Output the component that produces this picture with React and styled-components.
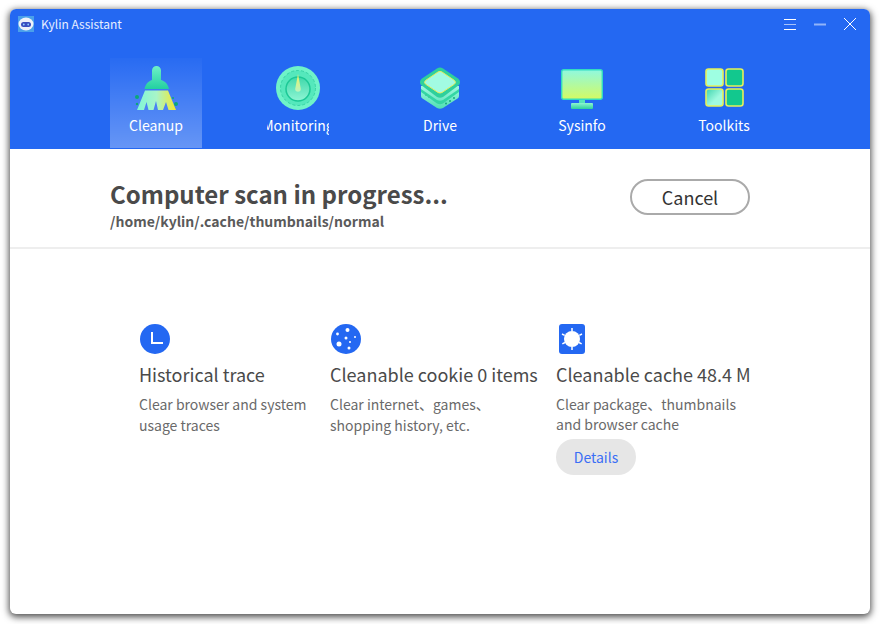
import styled, { createGlobalStyle } from "styled-components";

const GlobalStyle = createGlobalStyle`
  html, body {
    margin: 0;
    padding: 0;
    background: #fff;
  }
  * { box-sizing: border-box; }
`;

const Page = styled.div`
  width: 880px;
  height: 624px;
  padding: 9px 10px 10px;
  font-family: "Noto Sans CJK SC", "Noto Sans", sans-serif;
  overflow: hidden;
`;

const Window = styled.div`
  width: 860px;
  height: 605px;
  display: flex;
  flex-direction: column;
  background: #fff;
  border-radius: 6px;
  overflow: hidden;
  box-shadow: 0 2px 7px 1px rgba(0, 0, 0, 0.7);
`;

const Header = styled.header`
  height: 140px;
  flex: none;
  background: #2468f2;
  display: flex;
  flex-direction: column;
`;

const TitleBar = styled.div`
  height: 49px;
  display: flex;
  align-items: flex-start;
  padding: 7px 13px 0 8px;
`;

const AppName = styled.div`
  margin-left: 7px;
  font-size: 12px;
  line-height: 16px;
  color: #e8efff;
`;

const WindowControls = styled.div`
  margin-left: auto;
  display: flex;
  gap: 16px;
  padding-top: 1px;
`;

const ControlIcon = styled.svg`
  width: 14px;
  height: 14px;
  display: block;
  stroke: #fff;
  fill: none;
`;

const Nav = styled.nav`
  display: flex;
  gap: 50px;
  padding-left: 100px;
`;

const Tab = styled.div`
  width: 92px;
  height: 90px;
  display: flex;
  flex-direction: column;
  align-items: center;
  padding-top: 7px;
  background: ${(p) =>
    p.$active
      ? "linear-gradient(180deg, rgba(255,255,255,0.02), rgba(255,255,255,0.3))"
      : "transparent"};
`;

const TabIcon = styled.svg`
  width: 46px;
  height: 46px;
  display: block;
`;

const TabLabel = styled.div`
  width: 62px;
  margin-top: 4px;
  display: flex;
  justify-content: center;
  overflow: hidden;
  white-space: nowrap;
  font-size: 14px;
  line-height: 20px;
  color: #fff;
`;

const ScanBar = styled.section`
  height: 100px;
  flex: none;
  display: flex;
  align-items: flex-start;
  justify-content: space-between;
  padding: 28px 120px 0 100px;
  border-bottom: 2px solid #eeeeee;
`;

const ScanTitle = styled.h1`
  margin: 0;
  font-size: 24px;
  line-height: 34px;
  font-weight: 700;
  color: #4a4a4a;
`;

const ScanPath = styled.div`
  font-size: 14px;
  line-height: 20px;
  font-weight: 700;
  color: #5a5a5a;
`;

const CancelButton = styled.button`
  width: 120px;
  height: 36px;
  margin-top: 2px;
  border: 2px solid #aaaaaa;
  border-radius: 18px;
  background: #fff;
  font-family: inherit;
  font-size: 18px;
  line-height: 24px;
  color: #333;
  padding: 0;
`;

const Columns = styled.section`
  display: grid;
  grid-template-columns: 191px 226px 200px;
  padding: 74px 0 0 129px;
`;

const Column = styled.div`
  display: flex;
  flex-direction: column;
  align-items: flex-start;
`;

const ItemIcon = styled.svg`
  width: 32px;
  height: 32px;
  display: block;
`;

const ItemTitle = styled.div`
  margin-top: 6px;
  font-size: 18px;
  line-height: 26px;
  color: #4a4a4a;
  white-space: nowrap;
`;

const ItemText = styled.div`
  margin-top: 7px;
  font-size: 14px;
  line-height: ${(p) => (p.$tight ? 20 : 21)}px;
  color: #6a6a6a;
  white-space: nowrap;
`;

const DetailsButton = styled.button`
  width: 80px;
  height: 36px;
  margin-top: 5px;
  border: none;
  border-radius: 18px;
  background: #e6e6e6;
  font-family: inherit;
  font-size: 14px;
  color: #3b6ef5;
  padding: 0;
`;

const CleanupIcon = () => (
  <TabIcon viewBox="0 0 46 46">
    <defs>
      <linearGradient id="brushTop" x1="0" y1="0" x2="0" y2="1">
        <stop offset="0" stopColor="#6ff0c8" />
        <stop offset="1" stopColor="#22d0a0" />
      </linearGradient>
      <linearGradient id="brushBottom" x1="0" y1="0" x2="1" y2="0">
        <stop offset="0" stopColor="#7ff5d8" />
        <stop offset="0.5" stopColor="#a8f5c8" />
        <stop offset="1" stopColor="#f4e82c" />
      </linearGradient>
    </defs>
    <path d="M19 15V5.500a4.500 4.500 0 0 1 9 0V15c4 1 7 4 8 9H11.500c1-5 4-8 7.500-9z" fill="url(#brushTop)" />
    <path d="M12 25.500H35L43 45H35.500L33 37L30 45H25L23 36L20.500 45H15.500L13.500 37L11 45H4z" fill="url(#brushBottom)" />
    <circle cx="4" cy="32" r="2" fill="#0aa878" />
    <circle cx="43" cy="39" r="2" fill="#0aa878" />
    <circle cx="4" cy="39" r="1.200" fill="#0aa878" />
    <circle cx="40" cy="33" r="1" fill="#0aa878" />
  </TabIcon>
);

const MonitoringIcon = () => (
  <TabIcon viewBox="0 0 46 46">
    <defs>
      <linearGradient id="gaugeInner" x1="0" y1="0" x2="0" y2="1">
        <stop offset="0" stopColor="#3fd8aa" />
        <stop offset="1" stopColor="#8ff5d4" />
      </linearGradient>
      <linearGradient id="needle" x1="0" y1="0" x2="0" y2="1">
        <stop offset="0" stopColor="#eef060" />
        <stop offset="1" stopColor="#b8f5c0" />
      </linearGradient>
    </defs>
    <circle cx="23" cy="23" r="22" fill="#6ff3c8" />
    <circle cx="23" cy="23" r="17.500" fill="#55e8bc" stroke="#38d4a6" strokeWidth="1" strokeDasharray="3 2" />
    <circle cx="23" cy="24" r="12" fill="url(#gaugeInner)" stroke="#1cc896" strokeWidth="1.500" />
    <path d="M23 9l2.800 15a2.800 2.800 0 1 1-5.600 0z" fill="url(#needle)" />
  </TabIcon>
);

const DriveIcon = () => (
  <TabIcon viewBox="0 0 46 46">
    <defs>
      <linearGradient id="driveSide" x1="0" y1="0" x2="0" y2="1">
        <stop offset="0" stopColor="#a0f8e0" />
        <stop offset="1" stopColor="#4fe0b4" />
      </linearGradient>
    </defs>
    <path d="M4 21v10q0 1.500 1.500 2.500L20 43q3 1.500 6 0l14.500-9.500q1.500-1 1.500-2.500V21z" fill="url(#driveSide)" />
    <path d="M4 24l16 11q3 1.500 6 0l16-11v3L26 38.500q-3 1.500-6 0L4 27z" fill="#34d6a4" />
    <path d="M20 3.500q3-2 6 0l15 10q3.500 3 1 6.500L26 32q-3 1.500-6 0L4 20q-2.500-3.500 1-6.500z" fill="#2ed09c" />
    <path d="M21 7q2-1.300 4 0l12.500 8.500q2 1.800 0 3.600L25 27.500q-2 1-4 0L8.500 19.100q-2-1.800 0-3.600z" fill="#a2fbe2" stroke="#e8ee5c" strokeWidth="1" />
    <circle cx="29" cy="38.500" r="1" fill="#15a87c" />
    <circle cx="33" cy="36" r="1" fill="#15a87c" />
    <circle cx="37" cy="33" r="1" fill="#15a87c" />
    <circle cx="9" cy="30" r="1" fill="#3ec89c" />
    <circle cx="12" cy="32" r="1" fill="#3ec89c" />
  </TabIcon>
);

const SysinfoIcon = () => (
  <TabIcon viewBox="0 0 46 46">
    <defs>
      <linearGradient id="screen" x1="0" y1="0" x2="0" y2="1">
        <stop offset="0" stopColor="#8ff8e0" />
        <stop offset="1" stopColor="#d4fb62" />
      </linearGradient>
      <linearGradient id="stand" x1="0" y1="0" x2="0" y2="1">
        <stop offset="0" stopColor="#8ff5d0" />
        <stop offset="1" stopColor="#2ed09c" />
      </linearGradient>
    </defs>
    <rect x="2.700" y="4.700" width="40.600" height="29.600" rx="2" fill="url(#screen)" stroke="#32dcc0" strokeWidth="1.400" />
    <path d="M20 35h6v3h-6z" fill="#56e4ba" />
    <rect x="12" y="38" width="22" height="6" rx="1" fill="url(#stand)" />
  </TabIcon>
);

const ToolkitsIcon = () => (
  <TabIcon viewBox="0 0 46 46">
    <defs>
      <linearGradient id="tile" x1="0" y1="0" x2="1" y2="1">
        <stop offset="0" stopColor="#3fd4ae" />
        <stop offset="0.6" stopColor="#a0fae0" />
      </linearGradient>
    </defs>
    <rect x="5" y="4" width="17" height="17" rx="2.500" fill="#9effe2" stroke="#e6f05a" strokeWidth="1.600" />
    <rect x="25" y="4" width="17" height="17" rx="2.500" fill="#12c88e" stroke="#e6f05a" strokeWidth="1.600" />
    <rect x="5" y="24" width="17" height="17" rx="2.500" fill="url(#tile)" stroke="#e6f05a" strokeWidth="1.600" />
    <rect x="25" y="24" width="17" height="17" rx="2.500" fill="#12c88e" stroke="#e6f05a" strokeWidth="1.600" />
  </TabIcon>
);

const tabs = [
  { label: "Cleanup", Icon: CleanupIcon, active: true },
  { label: "Monitoring", Icon: MonitoringIcon },
  { label: "Drive", Icon: DriveIcon },
  { label: "Sysinfo", Icon: SysinfoIcon },
  { label: "Toolkits", Icon: ToolkitsIcon },
];

export default function App() {
  return (
    <Page>
      <GlobalStyle />
      <Window>
        <Header>
          <TitleBar>
            <svg width="16" height="16" viewBox="0 0 16 16">
              <rect width="16" height="16" fill="#4aa0ea" />
              <ellipse cx="8" cy="8" rx="7.500" ry="6.500" fill="#eef2fa" />
              <rect x="3" y="6" width="10" height="5" rx="2.500" fill="#3a4fc0" />
              <circle cx="5.800" cy="8.500" r="0.900" fill="#8fd0ff" />
              <circle cx="10.200" cy="8.500" r="0.900" fill="#8fd0ff" />
            </svg>
            <AppName>Kylin Assistant</AppName>
            <WindowControls>
              <ControlIcon viewBox="0 0 14 14">
                <path d="M1 2.500h12" />
                <path d="M1 7.500h12" opacity="0.6" />
                <path d="M1 12.500h12" />
              </ControlIcon>
              <ControlIcon viewBox="0 0 14 14">
                <path d="M1 7.500h12" opacity="0.5" strokeWidth="2" />
              </ControlIcon>
              <ControlIcon viewBox="0 0 14 14">
                <path d="M1 1l12 12M13 1L1 13" />
              </ControlIcon>
            </WindowControls>
          </TitleBar>
          <Nav>
            {tabs.map(({ label, Icon, active }) => (
              <Tab key={label} $active={active}>
                <Icon />
                <TabLabel>{label}</TabLabel>
              </Tab>
            ))}
          </Nav>
        </Header>

        <ScanBar>
          <div>
            <ScanTitle>Computer scan in progress...</ScanTitle>
            <ScanPath>/home/kylin/.cache/thumbnails/normal</ScanPath>
          </div>
          <CancelButton>Cancel</CancelButton>
        </ScanBar>

        <Columns>
          <Column>
            <ItemIcon viewBox="0 0 32 32">
              <circle cx="16" cy="16" r="15" fill="#2468f2" />
              <path d="M13 9v11h11" fill="none" stroke="#fff" strokeWidth="2" />
            </ItemIcon>
            <ItemTitle>Historical trace</ItemTitle>
            <ItemText>
              Clear browser and system
              <br />
              usage traces
            </ItemText>
          </Column>
          <Column>
            <ItemIcon viewBox="0 0 32 32">
              <circle cx="16" cy="16" r="15" fill="#2468f2" />
              <g fill="#fff">
                <circle cx="17.500" cy="7" r="2" />
                <circle cx="7.500" cy="11" r="1.400" />
                <circle cx="16" cy="15" r="1.500" />
                <circle cx="25" cy="14" r="1" />
                <circle cx="20" cy="19" r="1" />
                <circle cx="9" cy="21" r="2.500" />
                <circle cx="19" cy="25" r="1.500" />
              </g>
            </ItemIcon>
            <ItemTitle>Cleanable cookie 0 items</ItemTitle>
            <ItemText>
              Clear internet、games、
              <br />
              shopping history, etc.
            </ItemText>
          </Column>
          <Column>
            <ItemIcon viewBox="0 0 32 32">
              <rect x="3" y="1" width="26" height="30" rx="3" fill="#2468f2" />
              <circle cx="16" cy="16" r="8" fill="#fff" />
              <path
                d="M16 5v22M6 11l20 10M26 11L6 21"
                stroke="#fff"
                strokeWidth="1.500"
                strokeDasharray="3 16 3"
              />
            </ItemIcon>
            <ItemTitle>Cleanable cache 48.4 M</ItemTitle>
            <ItemText $tight>
              Clear package、thumbnails
              <br />
              and browser cache
            </ItemText>
            <DetailsButton>Details</DetailsButton>
          </Column>
        </Columns>
      </Window>
    </Page>
  );
}
